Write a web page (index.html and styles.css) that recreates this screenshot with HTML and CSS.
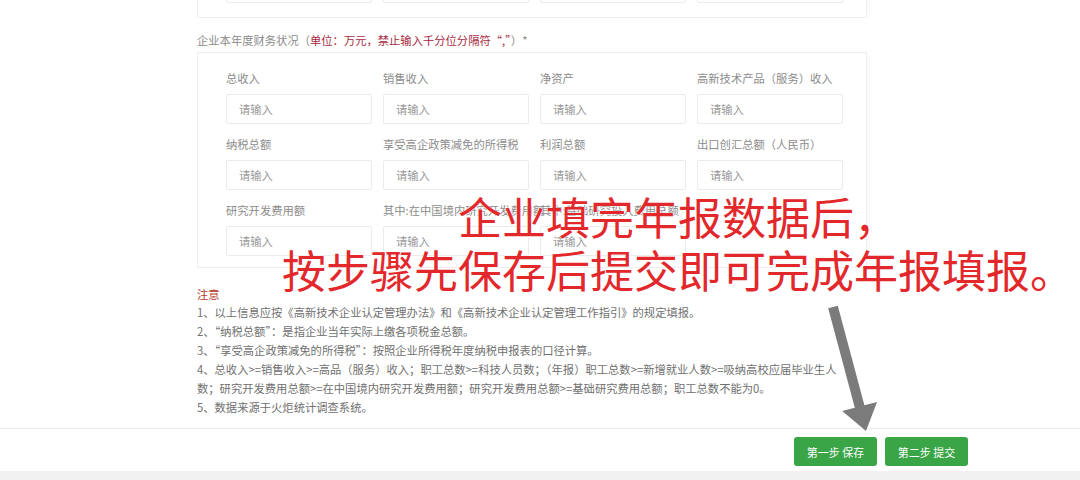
FILE: index.html
```html
<!DOCTYPE html>
<html lang="zh-CN">
<head>
<meta charset="utf-8">
<title>企业年报填报</title>
<link rel="stylesheet" href="styles.css">
</head>
<body>
<div class="page">
  <div class="content">
    <section class="panel prev">
      <div class="grid">
        <div class="input"></div>
        <div class="input"></div>
        <div class="input"></div>
        <div class="input"></div>
      </div>
    </section>

    <h3 class="sec-title">企业本年度财务状况（<span class="warn">单位：万元，禁止输入千分位分隔符“,”</span>）*</h3>

    <section class="panel">
      <div class="grid">
        <div class="field"><label>总收入</label><div class="input">请输入</div></div>
        <div class="field"><label>销售收入</label><div class="input">请输入</div></div>
        <div class="field"><label>净资产</label><div class="input">请输入</div></div>
        <div class="field"><label>高新技术产品（服务）收入</label><div class="input">请输入</div></div>
        <div class="field"><label>纳税总额</label><div class="input">请输入</div></div>
        <div class="field"><label>享受高企政策减免的所得税</label><div class="input">请输入</div></div>
        <div class="field"><label>利润总额</label><div class="input">请输入</div></div>
        <div class="field"><label>出口创汇总额（人民币）</label><div class="input">请输入</div></div>
        <div class="field"><label>研究开发费用额</label><div class="input">请输入</div></div>
        <div class="field"><label>其中:在中国境内研究开发费用额</label><div class="input">请输入</div></div>
        <div class="field"><label>其中:基础研究投入费用总额</label><div class="input">请输入</div></div>
      </div>
    </section>

    <div class="notes">
      <div class="notes-title">注意</div>
      <p>1、以上信息应按《高新技术企业认定管理办法》和《高新技术企业认定管理工作指引》的规定填报。</p>
      <p>2、“纳税总额”：是指企业当年实际上缴各项税金总额。</p>
      <p>3、“享受高企政策减免的所得税”：按照企业所得税年度纳税申报表的口径计算。</p>
      <p>4、总收入&gt;=销售收入&gt;=高品（服务）收入；职工总数&gt;=科技人员数；（年报）职工总数&gt;=新增就业人数&gt;=吸纳高校应届毕业生人数；研究开发费用总额&gt;=在中国境内研究开发费用额；研究开发费用总额&gt;=基础研究费用总额；职工总数不能为0。</p>
      <p>5、数据来源于火炬统计调查系统。</p>
    </div>
  </div>

  <footer class="actions">
    <button class="btn">第一步 保存</button>
    <button class="btn">第二步 提交</button>
  </footer>
  <div class="bottom-band"></div>

  <div class="annotation">企业填完年报数据后，<br>按步骤先保存后提交即可完成年报填报。</div>
  <svg class="arrow" width="70" height="140" viewBox="0 0 70 140">
    <polygon points="8.2,8.3 17.8,5.7 44.4,105.2 57,101.9 46,131 22.2,111.1 34.8,107.8" fill="#7b7b7b"/>
  </svg>
</div>
</body>
</html>
```

FILE: styles.css
```css
* { box-sizing: border-box; }
html, body { margin: 0; padding: 0; background: #fff; }
body {
  font-family: "Noto Sans CJK SC", "Noto Sans", sans-serif;
  font-size: 11.3px;
  color: #888;
  overflow: hidden;
}
.page {
  position: relative;
  width: 1080px;
  height: 480px;
  overflow: hidden;
}
.content {
  margin-left: 197px;
  width: 682px;
}
.panel {
  width: 670px;
  border: 1px solid #efefef;
  background: #fff;
  padding: 16px 24px 0 28px;
  box-shadow: 5px 0 6px -4px rgba(0,0,0,0.05);
}
.panel.prev {
  margin-top: -43px;
  border-top: none;
  padding-bottom: 14px;
}
.grid {
  display: grid;
  grid-template-columns: repeat(4, 146px);
  column-gap: 11px;
}
.field {
  display: flex;
  flex-direction: column;
  margin-bottom: 11px;
}
.field label {
  line-height: 18px;
  height: 18px;
  margin-bottom: 7px;
  color: #8c8c8c;
  white-space: nowrap;
}
.input {
  height: 30px;
  border: 1px solid #ebebeb;
  border-radius: 2px;
  padding-left: 12px;
  line-height: 28px;
  color: #9a9a9a;
  background: #fff;
}
.sec-title {
  margin: 12px 0 0;
  font-weight: normal;
  font-size: 11.3px;
  line-height: 20px;
  color: #8a8a8a;
  height: 22px;
}
.warn { color: #a8293f; }
.notes {
  margin-top: 18px;
  width: 652px;
  color: #707070;
  line-height: 19px;
}
.notes-title {
  color: #b83a2e;
  line-height: 17px;
}
.notes p { margin: 0; }
.actions {
  margin-top: 11px;
  border-top: 1px solid #ececec;
  height: 43px;
  display: flex;
  justify-content: flex-end;
  align-items: flex-start;
  gap: 8px;
  padding: 8px 112px 0 0;
}
.btn {
  width: 83px;
  height: 29px;
  border: none;
  border-radius: 3px;
  background: #3aa547;
  color: #fff;
  font-family: inherit;
  font-size: 11px;
  padding: 0;
}
.bottom-band {
  height: 12px;
  background: #f1f1f1;
}
.annotation {
  position: absolute;
  left: 0;
  top: 190px;
  width: 1356px;
  text-align: center;
  font-size: 44px;
  line-height: 53px;
  color: #e3282c;
  text-shadow: 0 0 2px #fff, 0 0 1px #fff;
  white-space: nowrap;
}
.arrow {
  position: absolute;
  left: 820px;
  top: 300px;
}
```
